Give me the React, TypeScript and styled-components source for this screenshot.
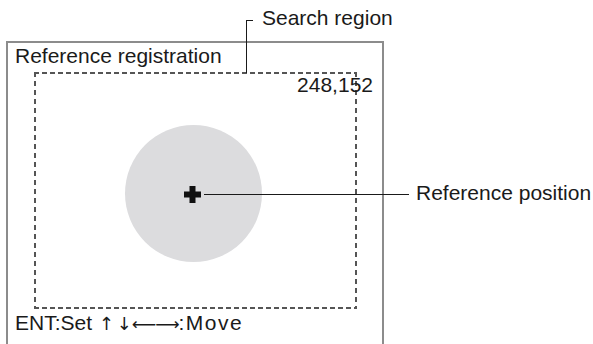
import React from 'react';
import styled, { createGlobalStyle } from 'styled-components';

const GlobalStyle = createGlobalStyle`
    html, body {
        margin: 0;
        padding: 0;
        background: #fff;
    }

    body {
        font-family: 'Liberation Sans', Arial, sans-serif;
        color: #1a1a1a;
    }
`;

export default function App() {
    return (
        <>
            <GlobalStyle />
            <Page>
                <Screen>
                    <Caption>Reference registration</Caption>
                    <SearchRegion>
                        <Coordinates>248,152</Coordinates>
                        <Model>
                            <Crosshair viewBox="0 0 17 17">
                                <path d="M5.5 0h6v5.5H17v6h-5.5V17h-6v-5.5H0v-6h5.5z" fill="#111" />
                            </Crosshair>
                        </Model>
                    </SearchRegion>
                    <Caption $footer>
                        ENT:Set <Arrows>↑ ↓</Arrows>
                        <Arrows $wide>⟵⟶</Arrows>
                        <Action>:Move</Action>
                    </Caption>
                </Screen>

                <SearchCallout>
                    <Bracket />
                    <Label>Search region</Label>
                </SearchCallout>

                <PositionCallout>
                    <Leader />
                    <Label>Reference position</Label>
                </PositionCallout>
            </Page>
        </>
    );
}

const Page = styled.div`
    position: relative;
    width: 593px;
    height: 344px;
    overflow: hidden;
`;

const Screen = styled.div`
    display: flex;
    flex-direction: column;
    box-sizing: border-box;
    width: 378px;
    height: 303px;
    margin: 41px 0 0 6px;
    border: 2px solid #8c8c8c;
    border-bottom: none;
`;

const Caption = styled.div<{ $footer?: boolean }>`
    font-size: 21px;
    line-height: 24px;
    padding: ${(p) => (p.$footer ? '2px 0 0 7px' : '1px 0 0 7px')};
    white-space: nowrap;
`;

const Arrows = styled.span<{ $wide?: boolean }>`
    font-family: 'DejaVu Sans', sans-serif;
    font-size: ${(p) => (p.$wide ? '17px' : '18px')};
    letter-spacing: ${(p) => (p.$wide ? '-1px' : '0')};
    word-spacing: ${(p) => (p.$wide ? '0' : '-3px')};
    margin-left: ${(p) => (p.$wide ? '0' : '1px')};
`;

const Action = styled.span`
    letter-spacing: 1.5px;
`;

const SearchRegion = styled.div`
    position: relative;
    display: flex;
    align-items: flex-start;
    box-sizing: border-box;
    width: 323px;
    height: 237px;
    margin: 4px 0 0 26px;
    padding: 53px 0 0 91px;
    background:
        linear-gradient(to right, #555 5px, transparent 5px) left top / 8px 2px repeat-x,
        linear-gradient(to right, #555 5px, transparent 5px) left bottom / 8px 2px repeat-x,
        linear-gradient(to bottom, #555 5px, transparent 5px) left top / 2px 9px repeat-y,
        linear-gradient(to bottom, #555 5px, transparent 5px) right top / 2px 9px repeat-y;
`;

const Coordinates = styled.span`
    position: absolute;
    top: 1px;
    right: -16px;
    font-size: 21px;
    line-height: 24px;
`;

const Model = styled.div`
    display: flex;
    justify-content: center;
    align-items: center;
    width: 137px;
    height: 137px;
    border-radius: 50%;
    background-color: #dcdcde;
`;

const Crosshair = styled.svg`
    width: 17px;
    height: 17px;
    margin: 1px 3px 0 0;
`;

const SearchCallout = styled.div`
    position: absolute;
    left: 246px;
    top: 6px;
    display: flex;
    align-items: flex-start;
`;

const Bracket = styled.div`
    width: 6px;
    height: 52px;
    margin: 14px 9px 0 0;
    border-left: 1px solid #1a1a1a;
    border-top: 1px solid #1a1a1a;
`;

const PositionCallout = styled.div`
    position: absolute;
    left: 204px;
    top: 181px;
    display: flex;
    align-items: flex-start;
`;

const Leader = styled.div`
    width: 205px;
    height: 1px;
    margin: 13px 7px 0 0;
    background-color: #1a1a1a;
`;

const Label = styled.span`
    font-size: 21px;
    line-height: 24px;
    white-space: nowrap;
`;
